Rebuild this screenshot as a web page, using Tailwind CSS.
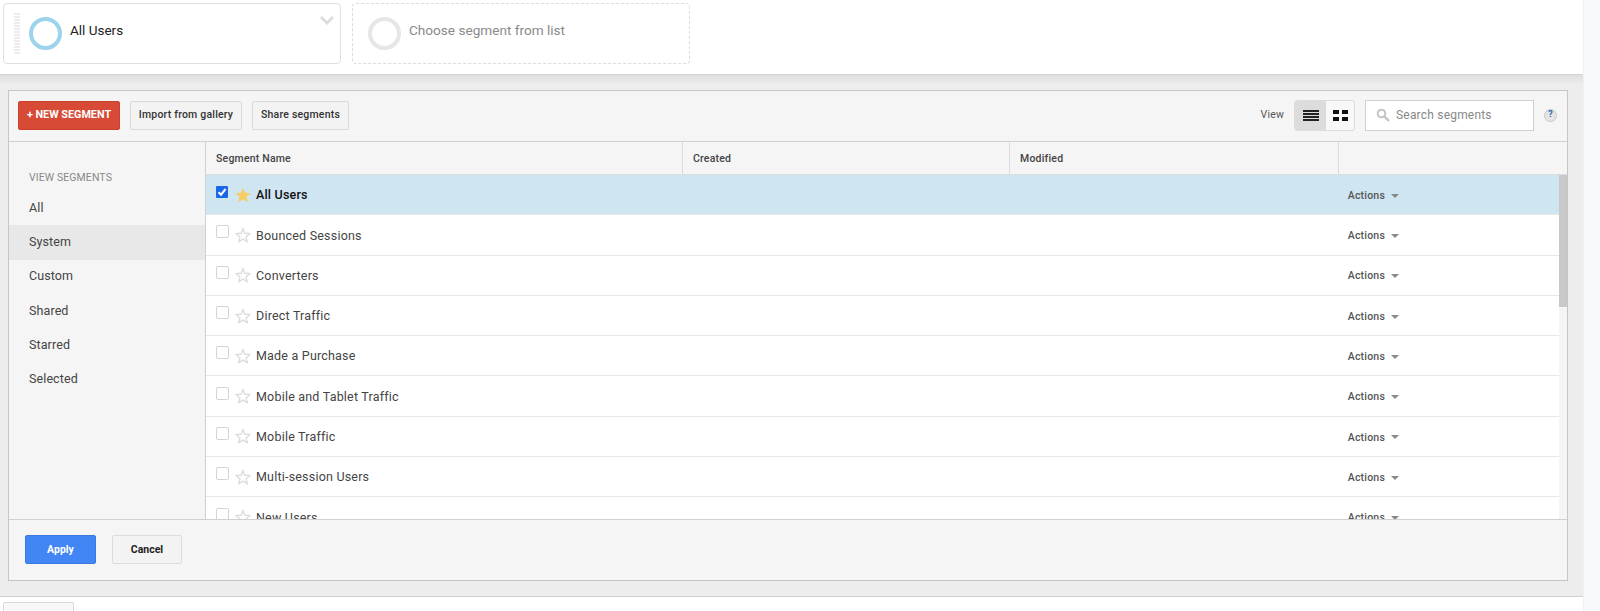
<!DOCTYPE html>
<html>
<head>
<meta charset="utf-8">
<script src="https://cdn.jsdelivr.net/npm/@tailwindcss/browser@4"></script>
</head>
<body class="m-0 bg-white">
<div class="w-[1600px] h-[611px] overflow-hidden flex font-['Roboto',sans-serif] text-[#333]">
  <div class="w-[1583px] shrink-0 flex flex-col">
    <!-- top segments -->
    <div class="h-[75px] shrink-0 flex gap-[11px] pl-[3px] pt-[3px] border-b border-[#d4d4d4]">
      <div class="relative w-[338px] h-[61px] border border-[#e0e0e0] rounded-[4px] flex items-center bg-white">
        <div class="ml-[10px] w-[6px] h-[42px] bg-[repeating-linear-gradient(#ececec_0,#ececec_2px,#fff_2px,#fff_3px)]"></div>
        <div class="ml-[9px] w-[33px] h-[33px] shrink-0 rounded-full border-[4px] border-[#9dd3ec]"></div>
        <div class="relative -top-[3px] ml-[8px] text-[13.5px] text-[#222]">All Users</div>
        <svg class="absolute right-[5px] top-[11px]" width="16" height="11" viewBox="0 0 16 11"><path d="M2 2 L8 8 L14 2" fill="none" stroke="#dcdcdc" stroke-width="3"/></svg>
      </div>
      <div class="w-[338px] h-[61px] border border-dashed border-[#dcdcdc] rounded-[4px] flex items-center bg-white">
        <div class="ml-[15px] w-[33px] h-[33px] rounded-full border-[4px] border-[#e6e6e6]"></div>
        <div class="relative -top-[3px] ml-[8px] text-[13.6px] text-[#8a8a8a]">Choose segment from list</div>
      </div>
    </div>
    <!-- gray area -->
    <div class="h-[522px] shrink-0 bg-[#ececec] bg-[linear-gradient(#dedede_0,#ededed_10px)] border-b border-[#cfcfcf] pl-[8px] pr-[15px] pt-[15px]">
      <div class="w-[1560px] h-[491px] border border-[#c6c6c6] bg-[#f5f5f5] flex flex-col">
        <!-- toolbar -->
        <div class="h-[51px] shrink-0 border-b border-[#d0d0d0] flex items-center pl-[9px] pb-[2px] text-[11px]">
          <div class="w-[102px] h-[29px] bg-[#d74a35] border border-[#c9412d] rounded-[2px] flex items-center justify-center text-white font-bold text-[10.8px]">+ NEW SEGMENT</div>
          <div class="ml-[10px] w-[112px] h-[29px] bg-[#f3f3f3] border border-[#d9d9d9] rounded-[2px] flex items-center justify-center text-[#333] font-medium text-[10.5px] tracking-[0.2px]">Import from gallery</div>
          <div class="ml-[10px] w-[97px] h-[29px] bg-[#f3f3f3] border border-[#d9d9d9] rounded-[2px] flex items-center justify-center text-[#333] font-medium text-[10.5px] tracking-[0.2px]">Share segments</div>
          <div class="ml-auto text-[10.5px] tracking-[0.2px] text-[#555]">View</div>
          <div class="ml-[10px] w-[61px] h-[31px] border border-[#dcdcdc] rounded-[3px] flex overflow-hidden bg-[#f8f8f8]">
            <div class="w-[31px] bg-[#dcdcdc] flex flex-col gap-[1px] items-center justify-center">
              <span class="w-[16px] h-[2px] bg-[#222]"></span><span class="w-[16px] h-[2px] bg-[#222]"></span><span class="w-[16px] h-[2px] bg-[#222]"></span><span class="w-[16px] h-[2px] bg-[#222]"></span>
            </div>
            <div class="flex-1 grid grid-cols-[6px_6px] grid-rows-[4px_4px] gap-x-[3px] gap-y-[3px] content-center justify-center">
              <span class="bg-[#111]"></span><span class="bg-[#111]"></span><span class="bg-[#111]"></span><span class="bg-[#111]"></span>
            </div>
          </div>
          <div class="ml-[10px] w-[169px] h-[31px] bg-white border border-[#d0d0d0] flex items-center pl-[10px]">
            <svg width="14" height="14" viewBox="0 0 14 14"><circle cx="5.5" cy="5.5" r="3.8" fill="none" stroke="#c4c4c4" stroke-width="2"/><path d="M8.5 8.5 L13 13" stroke="#c4c4c4" stroke-width="2.4"/></svg>
            <span class="ml-[6px] text-[12px] tracking-[0.2px] text-[#888]">Search segments</span>
          </div>
          <div class="ml-[10px] mr-[10px] w-[13px] h-[13px] rounded-full bg-[#e4e4e4] border border-[#c8c8c8] flex items-center justify-center text-[9px] font-bold text-[#2a6bb5]">?</div>
        </div>
        <!-- body -->
        <div class="h-[377px] shrink-0 flex overflow-hidden">
          <div class="w-[197px] shrink-0 border-r border-[#d0d0d0] pt-[29px] text-[12.5px] tracking-[0.1px] text-[#444]">
            <div class="pl-[20px] text-[10.5px] text-[#888] h-[16px] leading-[14px] tracking-[0.1px]">VIEW SEGMENTS</div>
            <div class="pl-[20px] h-[34.3px] flex items-center mt-[4px]">All</div>
            <div class="pl-[20px] h-[34.3px] flex items-center bg-[#e8e8e8]">System</div>
            <div class="pl-[20px] h-[34.3px] flex items-center">Custom</div>
            <div class="pl-[20px] h-[34.3px] flex items-center">Shared</div>
            <div class="pl-[20px] h-[34.3px] flex items-center">Starred</div>
            <div class="pl-[20px] h-[34.3px] flex items-center">Selected</div>
          </div>
          <div class="flex-1 min-w-0 flex flex-col">
            <!-- header -->
            <div class="h-[33px] shrink-0 border-b border-[#dcdcdc] flex items-center text-[10.5px] font-medium tracking-[0.2px] text-[#444]">
              <div class="w-[477px] h-full flex items-center pl-[10px] pt-[2px] border-r border-[#dcdcdc]">Segment Name</div>
              <div class="w-[327px] h-full flex items-center pl-[10px] pt-[2px] border-r border-[#dcdcdc]">Created</div>
              <div class="w-[329px] h-full flex items-center pl-[10px] pt-[2px] border-r border-[#dcdcdc]">Modified</div>
            </div>
            <div class="relative flex-1 min-h-0 overflow-hidden bg-white">
              <!-- scrollbar -->
              <div class="absolute right-0 top-0 bottom-0 w-[8px] bg-[#f5f5f5]"><div class="h-[132px] bg-[#c9c9c9]"></div></div>
              <!-- selected -->
              <div class="h-[40.3px] bg-[#cfe5f2] border-b border-[#e8e8e8] flex items-center pl-[10px] pr-[8px] text-[12.5px] tracking-[0.2px] font-medium text-[#111]">
                <div class="relative -top-[3px] w-[12px] h-[12px] bg-[#1a66e8] rounded-[1px] flex items-center justify-center"><svg width="10" height="10" viewBox="0 0 10 10"><path d="M1.5 5.2 L4 7.7 L8.6 2" fill="none" stroke="#fff" stroke-width="2"/></svg></div>
                <svg class="ml-[7px]" width="16" height="16" viewBox="0 0 24 24"><path d="M12 1 L15.2 8.6 L23.5 9.3 L17.2 14.8 L19.1 23 L12 18.6 L4.9 23 L6.8 14.8 L.5 9.3 L8.8 8.6 Z" fill="#f6cd62"/></svg>
                <span class="relative top-[1px] ml-[5px]">All Users</span>
                <span class="relative top-[1px] ml-auto mr-[160px] flex items-center text-[10.5px] font-medium tracking-[0.2px] text-[#555]">Actions<span class="ml-[6px] w-0 h-0 border-x-[4px] border-x-transparent border-t-[4px] border-t-[#888]"></span></span>
              </div>
              <!-- rows -->
              <div class="h-[40.3px] border-b border-[#e8e8e8] flex items-center pl-[10px] pr-[8px] text-[12.5px] tracking-[0.2px] text-[#444]">
                <div class="relative -top-[3px] w-[13px] h-[13px] border border-[#d4d4d4] rounded-[2px]"></div>
                <svg class="ml-[6px]" width="16" height="16" viewBox="0 0 24 24"><path d="M12 2.5 L14.8 9.4 L22.2 10 L16.6 14.9 L18.3 22 L12 18.2 L5.7 22 L7.4 14.9 L1.8 10 L9.2 9.4 Z" fill="none" stroke="#dcdcdc" stroke-width="2"/></svg>
                <span class="relative top-[1px] ml-[5px]">Bounced Sessions</span>
                <span class="relative top-[1px] ml-auto mr-[160px] flex items-center text-[10.5px] font-medium tracking-[0.2px] text-[#555]">Actions<span class="ml-[6px] w-0 h-0 border-x-[4px] border-x-transparent border-t-[4px] border-t-[#888]"></span></span>
              </div>
              <div class="h-[40.3px] border-b border-[#e8e8e8] flex items-center pl-[10px] pr-[8px] text-[12.5px] tracking-[0.2px] text-[#444]">
                <div class="relative -top-[3px] w-[13px] h-[13px] border border-[#d4d4d4] rounded-[2px]"></div>
                <svg class="ml-[6px]" width="16" height="16" viewBox="0 0 24 24"><path d="M12 2.5 L14.8 9.4 L22.2 10 L16.6 14.9 L18.3 22 L12 18.2 L5.7 22 L7.4 14.9 L1.8 10 L9.2 9.4 Z" fill="none" stroke="#dcdcdc" stroke-width="2"/></svg>
                <span class="relative top-[1px] ml-[5px]">Converters</span>
                <span class="relative top-[1px] ml-auto mr-[160px] flex items-center text-[10.5px] font-medium tracking-[0.2px] text-[#555]">Actions<span class="ml-[6px] w-0 h-0 border-x-[4px] border-x-transparent border-t-[4px] border-t-[#888]"></span></span>
              </div>
              <div class="h-[40.3px] border-b border-[#e8e8e8] flex items-center pl-[10px] pr-[8px] text-[12.5px] tracking-[0.2px] text-[#444]">
                <div class="relative -top-[3px] w-[13px] h-[13px] border border-[#d4d4d4] rounded-[2px]"></div>
                <svg class="ml-[6px]" width="16" height="16" viewBox="0 0 24 24"><path d="M12 2.5 L14.8 9.4 L22.2 10 L16.6 14.9 L18.3 22 L12 18.2 L5.7 22 L7.4 14.9 L1.8 10 L9.2 9.4 Z" fill="none" stroke="#dcdcdc" stroke-width="2"/></svg>
                <span class="relative top-[1px] ml-[5px]">Direct Traffic</span>
                <span class="relative top-[1px] ml-auto mr-[160px] flex items-center text-[10.5px] font-medium tracking-[0.2px] text-[#555]">Actions<span class="ml-[6px] w-0 h-0 border-x-[4px] border-x-transparent border-t-[4px] border-t-[#888]"></span></span>
              </div>
              <div class="h-[40.3px] border-b border-[#e8e8e8] flex items-center pl-[10px] pr-[8px] text-[12.5px] tracking-[0.2px] text-[#444]">
                <div class="relative -top-[3px] w-[13px] h-[13px] border border-[#d4d4d4] rounded-[2px]"></div>
                <svg class="ml-[6px]" width="16" height="16" viewBox="0 0 24 24"><path d="M12 2.5 L14.8 9.4 L22.2 10 L16.6 14.9 L18.3 22 L12 18.2 L5.7 22 L7.4 14.9 L1.8 10 L9.2 9.4 Z" fill="none" stroke="#dcdcdc" stroke-width="2"/></svg>
                <span class="relative top-[1px] ml-[5px]">Made a Purchase</span>
                <span class="relative top-[1px] ml-auto mr-[160px] flex items-center text-[10.5px] font-medium tracking-[0.2px] text-[#555]">Actions<span class="ml-[6px] w-0 h-0 border-x-[4px] border-x-transparent border-t-[4px] border-t-[#888]"></span></span>
              </div>
              <div class="h-[40.3px] border-b border-[#e8e8e8] flex items-center pl-[10px] pr-[8px] text-[12.5px] tracking-[0.2px] text-[#444]">
                <div class="relative -top-[3px] w-[13px] h-[13px] border border-[#d4d4d4] rounded-[2px]"></div>
                <svg class="ml-[6px]" width="16" height="16" viewBox="0 0 24 24"><path d="M12 2.5 L14.8 9.4 L22.2 10 L16.6 14.9 L18.3 22 L12 18.2 L5.7 22 L7.4 14.9 L1.8 10 L9.2 9.4 Z" fill="none" stroke="#dcdcdc" stroke-width="2"/></svg>
                <span class="relative top-[1px] ml-[5px]">Mobile and Tablet Traffic</span>
                <span class="relative top-[1px] ml-auto mr-[160px] flex items-center text-[10.5px] font-medium tracking-[0.2px] text-[#555]">Actions<span class="ml-[6px] w-0 h-0 border-x-[4px] border-x-transparent border-t-[4px] border-t-[#888]"></span></span>
              </div>
              <div class="h-[40.3px] border-b border-[#e8e8e8] flex items-center pl-[10px] pr-[8px] text-[12.5px] tracking-[0.2px] text-[#444]">
                <div class="relative -top-[3px] w-[13px] h-[13px] border border-[#d4d4d4] rounded-[2px]"></div>
                <svg class="ml-[6px]" width="16" height="16" viewBox="0 0 24 24"><path d="M12 2.5 L14.8 9.4 L22.2 10 L16.6 14.9 L18.3 22 L12 18.2 L5.7 22 L7.4 14.9 L1.8 10 L9.2 9.4 Z" fill="none" stroke="#dcdcdc" stroke-width="2"/></svg>
                <span class="relative top-[1px] ml-[5px]">Mobile Traffic</span>
                <span class="relative top-[1px] ml-auto mr-[160px] flex items-center text-[10.5px] font-medium tracking-[0.2px] text-[#555]">Actions<span class="ml-[6px] w-0 h-0 border-x-[4px] border-x-transparent border-t-[4px] border-t-[#888]"></span></span>
              </div>
              <div class="h-[40.3px] border-b border-[#e8e8e8] flex items-center pl-[10px] pr-[8px] text-[12.5px] tracking-[0.2px] text-[#444]">
                <div class="relative -top-[3px] w-[13px] h-[13px] border border-[#d4d4d4] rounded-[2px]"></div>
                <svg class="ml-[6px]" width="16" height="16" viewBox="0 0 24 24"><path d="M12 2.5 L14.8 9.4 L22.2 10 L16.6 14.9 L18.3 22 L12 18.2 L5.7 22 L7.4 14.9 L1.8 10 L9.2 9.4 Z" fill="none" stroke="#dcdcdc" stroke-width="2"/></svg>
                <span class="relative top-[1px] ml-[5px]">Multi-session Users</span>
                <span class="relative top-[1px] ml-auto mr-[160px] flex items-center text-[10.5px] font-medium tracking-[0.2px] text-[#555]">Actions<span class="ml-[6px] w-0 h-0 border-x-[4px] border-x-transparent border-t-[4px] border-t-[#888]"></span></span>
              </div>
              <div class="h-[40.3px] border-b border-[#e8e8e8] flex items-center pl-[10px] pr-[8px] text-[12.5px] tracking-[0.2px] text-[#444]">
                <div class="relative -top-[3px] w-[13px] h-[13px] border border-[#d4d4d4] rounded-[2px]"></div>
                <svg class="ml-[6px]" width="16" height="16" viewBox="0 0 24 24"><path d="M12 2.5 L14.8 9.4 L22.2 10 L16.6 14.9 L18.3 22 L12 18.2 L5.7 22 L7.4 14.9 L1.8 10 L9.2 9.4 Z" fill="none" stroke="#dcdcdc" stroke-width="2"/></svg>
                <span class="relative top-[1px] ml-[5px]">New Users</span>
                <span class="relative top-[1px] ml-auto mr-[160px] flex items-center text-[10.5px] font-medium tracking-[0.2px] text-[#555]">Actions<span class="ml-[6px] w-0 h-0 border-x-[4px] border-x-transparent border-t-[4px] border-t-[#888]"></span></span>
              </div>
            </div>
          </div>
        </div>
        <!-- footer -->
        <div class="flex-1 border-t border-[#d0d0d0] flex items-center pl-[16px] pb-[1px]">
          <div class="w-[71px] h-[29px] bg-[#4285f4] border border-[#3b78e0] rounded-[2px] flex items-center justify-center text-white font-bold text-[10.5px]">Apply</div>
          <div class="ml-[16px] w-[70px] h-[29px] bg-[#f3f3f3] border border-[#dcdcdc] rounded-[2px] flex items-center justify-center text-[#222] font-bold text-[10.5px]">Cancel</div>
        </div>
      </div>
    </div>
    <div class="flex-1 bg-white pl-[3px] pt-[5px] overflow-hidden">
      <div class="w-[71px] h-[20px] border border-[#d9d9d9] rounded-[2px] bg-[#f8f8f8]"></div>
    </div>
  </div>
  <div class="flex-1 bg-[#f8f9fb] border-l border-[#f0f0f0]"></div>
</div>
</body>
</html>
